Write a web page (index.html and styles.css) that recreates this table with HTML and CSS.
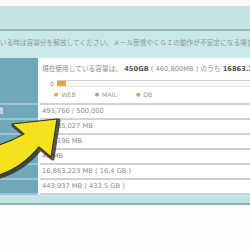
FILE: index.html
```html
<!DOCTYPE html>
<html lang="ja">
<head>
<meta charset="utf-8">
<link rel="stylesheet" href="styles.css">
</head>
<body>
<div class="page">
  <div class="topstrip"></div>
  <div class="panel"></div>
  <div class="notice"><span class="notice-text">超えている時は容量分を解放してください。メール受信やＣＧＩの動作が不安定になる場合があります。</span></div>
  <div class="table">
    <div class="row usage-row">
      <div class="th"></div>
      <div class="td">
        <div class="usage">現在使用している容量は、 <b>450GB</b> ( 460,800MB ) のうち <b>16863.2MB</b> です。</div>
        <div class="bar"><span class="zero">0</span><div class="track"><div class="fill" style="width:9px"></div></div></div>
        <div class="legend"><span class="dot web">●</span>WEB<span class="dot mail">●</span>MAIL<span class="dot db">●</span>DB</div>
      </div>
    </div>
    <div class="row"><div class="th"><span class="label">ファイル数</span></div><div class="td">493,766 / 500,000</div></div>
    <div class="row"><div class="th"></div><div class="td">16,235,027 MB</div></div>
    <div class="row"><div class="th"></div><div class="td">582,196 MB</div></div>
    <div class="row"><div class="th"></div><div class="td">46 MB</div></div>
    <div class="row"><div class="th"></div><div class="td">16,863,223 MB ( 16.4 GB )</div></div>
    <div class="row"><div class="th"></div><div class="td">443,937 MB ( 433.5 GB )</div></div>
  </div>
  <div class="footband"></div>
  <svg class="arrow" width="250" height="250" viewBox="0 0 250 250">
    <path class="arrow-shadow" d="M57 119 L12 124 L24 134 Q10 142 -5 146 L-5 176 Q20 170 39 147 L51 157 Z"/>
    <path class="arrow-body" d="M57 119 L12 124 L24 134 Q10 142 -5 146 L-5 176 Q20 170 39 147 L51 157 Z"/>
  </svg>
</div>
</body>
</html>
```

FILE: styles.css
```css
html, body {
  margin: 0;
  padding: 0;
  background: #fdfdfd;
}
.page {
  position: relative;
  width: 250px;
  height: 250px;
  overflow: hidden;
  font-family: "DejaVu Sans", "Noto Sans CJK JP", sans-serif;
  font-size: 6.7px;
  color: #8a8a8a;
}
.topstrip {
  height: 6px;
  background: #fbf8f8;
  border-bottom: 1px solid #d6dcdc;
}
.panel {
  height: 22px;
  background: #c6e6e6;
  border-bottom: 2px solid #97b7b7;
}
.notice {
  height: 27px;
  background: #cbe8e9;
  white-space: nowrap;
  overflow: hidden;
  line-height: 24px;
  color: #8c9a9a;
}
.notice-text {
  display: inline-block;
  margin-left: -20px;
}
.table {
  display: flex;
  flex-direction: column;
  background: #fdfdfd;
}
.row {
  display: grid;
  grid-template-columns: 38px 1fr;
  column-gap: 2px;
  height: 15px;
}
.usage-row {
  height: 47px;
}
.th {
  background: #70a8b9;
  border-bottom: 2px solid #9cc3cf;
  color: #fff;
  overflow: hidden;
  white-space: nowrap;
  line-height: 13px;
}
.label {
  display: inline-block;
  margin-left: -30px;
}
.td {
  background: #fff;
  border-bottom: 2px solid #d2d2d2;
  padding-left: 2px;
  white-space: nowrap;
  overflow: hidden;
  line-height: 13px;
}
.usage {
  line-height: 11px;
  padding-top: 6px;
}
.usage b {
  color: #555;
}
.bar {
  display: flex;
  align-items: center;
  gap: 3px;
  margin-top: 5px;
  padding-left: 8px;
  height: 7px;
}
.zero {
  font-size: 6px;
  line-height: 7px;
}
.track {
  flex: 1;
  height: 5px;
  border-top: 1px solid #cfcfcf;
  border-bottom: 1px solid #e4e4e4;
  background: #fafafa;
}
.fill {
  height: 5px;
  background: #e6a735;
}
.legend {
  display: flex;
  align-items: center;
  padding-left: 12px;
  margin-top: 3px;
  line-height: 9px;
  font-size: 6.2px;
  color: #9a9a9a;
}
.dot {
  font-size: 5px;
  margin-right: 3px;
}
.dot.mail, .dot.db {
  margin-left: 19px;
}
.dot.web { color: #e6a735; }
.dot.mail { color: #a0a0a0; }
.dot.db { color: #86c46e; }
.footband {
  height: 8px;
  background: #c3e4e5;
  border-bottom: 2px solid #8fb0b1;
}
.arrow {
  position: absolute;
  left: 0;
  top: 0;
  pointer-events: none;
}
.arrow-shadow {
  fill: #2e2e22;
  stroke: #2e2e22;
  stroke-width: 4;
  stroke-linejoin: round;
  transform: translate(1.5px, 1.5px);
  opacity: 0.8;
}
.arrow-body {
  fill: #f4e21c;
  stroke: #3a3a28;
  stroke-width: 1.2;
  stroke-linejoin: round;
}
```
